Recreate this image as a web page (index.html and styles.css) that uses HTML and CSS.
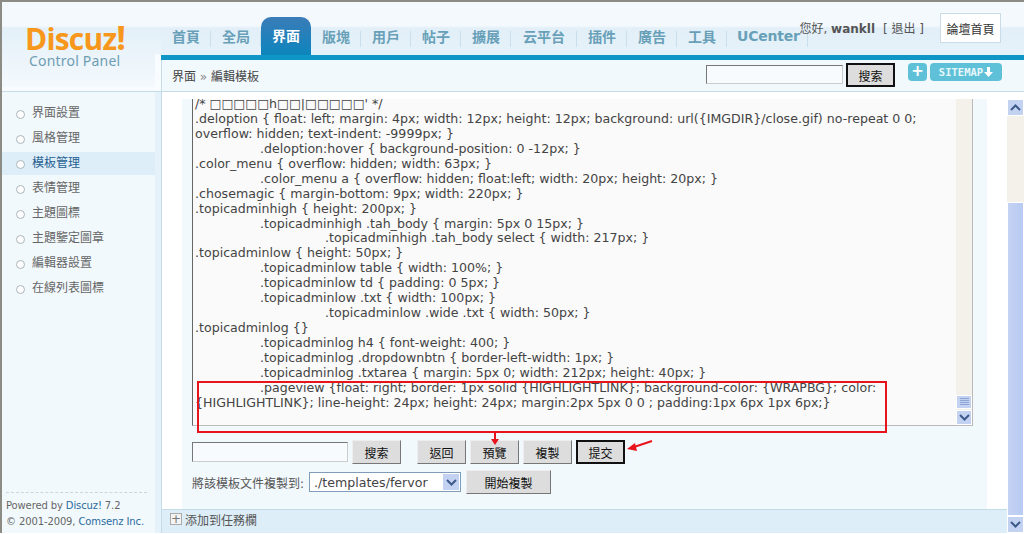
FILE: index.html
```html
<!DOCTYPE html>
<html lang="zh-Hant">
<head>
<meta charset="utf-8">
<title>Discuz! Control Panel</title>
<link rel="stylesheet" href="styles.css">
</head>
<body>
<div class="shell">
  <aside class="side">
    <div class="logo">
      <div class="logo-mark">Discuz<span class="logo-bang">!</span></div>
      <div class="logo-sub">Control Panel</div>
    </div>
    <ul class="menu">
      <li class="menu-item">界面設置</li>
      <li class="menu-item">風格管理</li>
      <li class="menu-item active">模板管理</li>
      <li class="menu-item">表情管理</li>
      <li class="menu-item">主題圖標</li>
      <li class="menu-item">主題鑒定圖章</li>
      <li class="menu-item">編輯器設置</li>
      <li class="menu-item">在線列表圖標</li>
    </ul>
    <div class="copy">
      <div>Powered by <a class="lnk">Discuz!</a> 7.2</div>
      <div>© 2001-2009, <a class="lnk">Comsenz Inc.</a></div>
    </div>
  </aside>
  <div class="right">
    <header class="top">
      <nav class="tabs">
        <a class="tab">首頁</a>
        <a class="tab">全局</a>
        <a class="tab on">界面</a>
        <a class="tab">版塊</a>
        <a class="tab">用戶</a>
        <a class="tab">帖子</a>
        <a class="tab">擴展</a>
        <a class="tab wide">云平台</a>
        <a class="tab">插件</a>
        <a class="tab">廣告</a>
        <a class="tab">工具</a>
        <a class="tab uc">UCenter</a>
      </nav>
      <div class="user">
        <span>您好, <b>wankll</b></span>
        <span class="logout">[ 退出 ]</span>
        <a class="home">論壇首頁</a>
      </div>
    </header>
    <div class="sub">
      <div class="crumb">界面 <span class="sep">»</span> 編輯模板</div>
      <div class="sub-tools">
        <input class="field top-field" type="text">
        <button class="btn strong">搜索</button>
        <span class="plus">+</span>
        <span class="sitemap">SITEMAP<svg class="map-arrow" width="9" height="10" viewBox="0 0 9 10"><path d="M3 0h3v5h3l-4.500 5L0 5h3z" fill="#fff"/></svg></span>
      </div>
    </div>
    <div class="lower">
      <div class="frame-col">
        <main class="frame">
          <div class="panel">
            <div class="editor">
<pre class="code">/* □□□□□h□□|□□□□□' */
.deloption { float: left; margin: 4px; width: 12px; height: 12px; background: url({IMGDIR}/close.gif) no-repeat 0 0;
overflow: hidden; text-indent: -9999px; }
	.deloption:hover { background-position: 0 -12px; }
.color_menu { overflow: hidden; width: 63px; }
	.color_menu a { overflow: hidden; float:left; width: 20px; height: 20px; }
.chosemagic { margin-bottom: 9px; width: 220px; }
.topicadminhigh { height: 200px; }
	.topicadminhigh .tah_body { margin: 5px 0 15px; }
		.topicadminhigh .tah_body select { width: 217px; }
.topicadminlow { height: 50px; }
	.topicadminlow table { width: 100%; }
	.topicadminlow td { padding: 0 5px; }
	.topicadminlow .txt { width: 100px; }
		.topicadminlow .wide .txt { width: 50px; }
.topicadminlog {}
	.topicadminlog h4 { font-weight: 400; }
	.topicadminlog .dropdownbtn { border-left-width: 1px; }
	.topicadminlog .txtarea { margin: 5px 0; width: 212px; height: 40px; }
	.pageview {float: right; border: 1px solid {HIGHLIGHTLINK}; background-color: {WRAPBG}; color:
{HIGHLIGHTLINK}; line-height: 24px; height: 24px; margin:2px 5px 0 0 ; padding:1px 6px 1px 6px;}</pre>
              <div class="ta-bar">
                <span class="ta-track"></span>
                <span class="ta-thumb"><svg width="9" height="8" viewBox="0 0 9 8"><path d="M0 .5h9M0 2.500h9M0 4.500h9M0 6.500h9" stroke="#8ea3d6"/></svg></span>
                <span class="ta-btn"><svg width="11" height="7" viewBox="0 0 11 7"><path d="M1 1l4.500 4.500L10 1" fill="none" stroke="#3d5a8a" stroke-width="2"/></svg></span>
              </div>
            </div>
            <div class="row row-a">
              <input class="field find-field" type="text">
              <button class="btn">搜索</button>
              <button class="btn gap-l">返回</button>
              <button class="btn">預覽</button>
              <button class="btn">複製</button>
              <button class="btn strong">提交</button>
            </div>
            <div class="row row-b">
              <span class="copy-label">將該模板文件複製到:</span>
              <span class="select">./templates/fervor<span class="select-btn"><svg width="11" height="7" viewBox="0 0 11 7"><path d="M1 1l4.500 4.500L10 1" fill="none" stroke="#3d5a8a" stroke-width="2"/></svg></span></span>
              <button class="btn copy-btn">開始複製</button>
            </div>
          </div>
        </main>
        <div class="taskbar"><span class="task-plus">+</span>添加到任務欄</div>
      </div>
      <div class="scroll">
        <span class="sb-btn"><svg width="11" height="7" viewBox="0 0 11 7"><path d="M1 6l4.500-4.500L10 6" fill="none" stroke="#3d5a8a" stroke-width="2"/></svg></span>
        <span class="sb-track"></span>
        <span class="sb-thumb"></span>
        <span class="sb-btn"><svg width="11" height="7" viewBox="0 0 11 7"><path d="M1 1l4.500 4.500L10 1" fill="none" stroke="#3d5a8a" stroke-width="2"/></svg></span>
      </div>
    </div>
  </div>
  <div class="mark-box"></div>
  <svg class="mark-down" width="10" height="12" viewBox="0 0 10 12"><path d="M4 0h2v6h3l-4 6-4-6h3z" fill="#e8141c"/></svg>
  <svg class="mark-left" width="26" height="12" viewBox="0 0 26 12"><path d="M25 1L7 7" stroke="#e8141c" stroke-width="2"/><path d="M0 9l8-6 2 8z" fill="#e8141c"/></svg>
</div>
</body>
</html>
```
FILE: styles.css
```css
* { box-sizing: border-box; }
html, body { margin: 0; height: 534px; overflow: hidden; background: #fff; }
body { font: 12px "DejaVu Sans", "Noto Sans CJK TC", sans-serif; color: #555; }
ul { list-style: none; margin: 0; padding: 0; }

.shell { position: relative; display: flex; height: 533px; border-top: 2px solid #8c8c84; border-left: 2px solid #8c8c84; }

.side { width: 159px; display: flex; flex-direction: column; background: linear-gradient(90deg, #f2f9fd 153px, #e6f2f9 153px); }
.logo { height: 89px; flex: none; background: linear-gradient(#f8fcfe, #f8fcfe) right bottom / 6px 37px no-repeat, linear-gradient(#f8fcfe, #f8fcfe) left bottom / 100% 4px no-repeat, linear-gradient(#f3f9fd 0, #f3f9fd 24px, #e3f0f8 26px, #f4f9fd 85px); padding: 17px 0 0 23px; }
.logo-mark { font: bold 30px/36px "Open Sans", "Liberation Sans", sans-serif; letter-spacing: -.8px; color: #f7971c; height: 35px; }
.logo-bang { font-size: 34px; }
.logo-sub { font: 14px/20px "Noto Sans", sans-serif; color: #6f9db2; padding-left: 4px; letter-spacing: .2px; margin-top: -3px; }
.menu { flex: 1; border-top: 1px solid #c4dbe8; padding-top: 9px; }
.menu-item { height: 25px; line-height: 25px; margin-right: 6px; padding-left: 30px; position: relative; font-size: 12px; color: #666; background: #f2f9fd; }
.menu-item::before { content: ""; position: absolute; left: 14px; top: 9px; width: 7px; height: 7px; border: 1px solid #aab5bb; border-radius: 50%; background: #fff; }
.menu-item.active { color: #1f5f92; background: #deeef8; height: 23px; line-height: 23px; margin: 1px 6px 1px 0; }
.menu-item.active::before { top: 8px; }
.copy { margin: 0 14px 0 4px; padding: 5px 0 0 0; border-top: 1px dashed #c9d6de; height: 41px; font: 10px/16px "DejaVu Sans", sans-serif; color: #666; white-space: nowrap; letter-spacing: -.12px; }
.lnk { color: #2a6a9e; }

.right { flex: 1; min-width: 0; display: flex; flex-direction: column; border-left: 1px solid #c4dbe8; }
.top { position: relative; height: 58px; margin-left: -1px; display: flex; background: linear-gradient(#f3f9fd 0, #f3f9fd 24px, #e2eff8 26px, #e6f2f9 52px); border-bottom: 5px solid #0d96c6; }
.tabs { display: flex; align-items: flex-end; }
.tab { width: 50px; height: 38px; padding-bottom: 1px; display: flex; align-items: center; justify-content: center; font: bold 14px "Noto Sans CJK TC", sans-serif; color: #68a0b8; background: linear-gradient(#c8dfec, #c8dfec) right 14px / 1px 16px no-repeat; }
.tab.on { color: #fff; background: linear-gradient(#3a7cb8, #0d85bd); border-radius: 10px 10px 0 0; padding-bottom: 2px; }
.tab.wide { width: 66px; }
.tab.uc { width: 81px; padding-left: 10px; justify-content: flex-start; white-space: nowrap; font: bold 14px "DejaVu Sans", sans-serif; letter-spacing: -.2px; }
.user { position: absolute; right: 23px; top: 11px; display: flex; align-items: flex-start; font-size: 12px; color: #555; }
.user > span { padding-top: 6px; white-space: nowrap; }
.logout { margin-left: 8px; }
.home { margin-left: 16px; width: 61px; height: 30px; border: 1px solid #c8dbe6; background: #fff; display: flex; align-items: center; justify-content: center; color: #333; }

.sub { height: 32px; display: flex; justify-content: space-between; align-items: flex-start; background: #f2f9fd; border-bottom: 1px solid #c4dbe8; }
.crumb { padding: 7px 0 0 10px; font-size: 12px; color: #444; }
.sep { color: #888; }
.sub-tools { display: flex; align-items: flex-start; margin-right: 22px; padding-top: 3px; }
.field { display: block; border: 1px solid; border-color: #777 #ccc #ccc #777; background: #f8fbfd; height: 20px; padding: 0; }
.top-field { width: 137px; margin: 2px 3px 0 0; height: 19px; }
.btn { width: 49px; height: 24px; padding: 0; font: 12px "Noto Sans CJK TC", sans-serif; color: #111; background: #ddd; border: 1px solid; border-color: #eee #777 #777 #eee; }
.btn.strong { border: 2px solid #111; }
.plus { width: 19px; height: 18px; margin-left: 13px; border-radius: 4px; background: #5fc1d8; color: #fff; font: bold 15px/17px "DejaVu Sans", sans-serif; text-align: center; }
.sitemap { width: 72px; height: 18px; margin-left: 3px; border-radius: 4px; background: #5fc1d8; color: #e8f8fb; font: bold 10.500px/18px "DejaVu Sans Mono", monospace; display: flex; align-items: center; justify-content: center; gap: 1px; }

.lower { flex: 1; min-height: 0; display: flex; padding-top: 7px; background: #fff; }
.frame-col { flex: 1; display: flex; flex-direction: column; min-width: 0; }
.frame { flex: 1; min-height: 0; padding: 0 20px; }
.panel { height: 100%; background: #f2f9fd; padding-left: 10px; padding-right: 12px; }
.editor { height: 327px; width: 781px; display: flex; background: #fafafa; border-left: 1px solid #666; border-bottom: 1px solid #bbb; border-right: 1px solid #bbb; overflow: hidden; }
.code { flex: 1; min-width: 0; margin: -2px 0 0; padding: 0 2px; white-space: pre-wrap; tab-size: 65px; overflow: hidden; font: 12.600px/14.930px "DejaVu Sans", sans-serif; color: #444; }
.ta-bar { width: 16px; display: flex; flex-direction: column; background: #f3f1ea; }
.ta-btn { flex: none; height: 15px; display: flex; align-items: center; justify-content: center; background: #c4d2f2; border: 1px solid #fff; }
.ta-track { flex: 1; }
.ta-thumb { height: 14px; margin-bottom: 1px; display: flex; align-items: center; justify-content: center; background: #c4d2f2; border: 1px solid #fff; }
.row { display: flex; align-items: center; }
.row-a { margin-top: 14px; gap: 4px; }
.find-field { width: 156px; }
.gap-l { margin-left: 12px; }
.row-b { margin-top: 6px; }
.copy-label { width: 117px; font-size: 12px; color: #555; white-space: nowrap; }
.select { position: relative; width: 152px; height: 20px; padding: 0 4px; border: 1px solid #7f9db9; background: #fff; font: 12.600px/19px "DejaVu Sans", sans-serif; color: #444; }
.select-btn { position: absolute; right: 1px; top: 1px; width: 16px; height: 16px; display: flex; align-items: center; justify-content: center; background: #c4d2f2; }
.copy-btn { width: 85px; margin-left: 5px; }

.taskbar { height: 24px; flex: none; display: flex; align-items: flex-start; background: #deeef8; border-top: 1px solid #c4dbe8; padding: 1px 0 0 8px; font-size: 12px; color: #555; gap: 3px; }
.task-plus { width: 12px; height: 12px; margin-top: 2px; border: 1px solid #aaa; background: #f4f4f4; font: 12px/10px "DejaVu Sans", sans-serif; text-align: center; color: #777; }

.scroll { width: 17px; flex: none; display: flex; flex-direction: column; background: #f3f1ea; }
.sb-btn { flex: none; height: 17px; display: flex; align-items: center; justify-content: center; background: #c4d2f2; border: 1px solid #fff; }
.sb-track { height: 86px; flex: none; }
.sb-thumb { flex: 1; background: linear-gradient(90deg, #c4d2f2, #b8caf4); border: 1px solid #fff; }

.mark-box { position: absolute; left: 195px; top: 379px; width: 690px; height: 52px; border: 2px solid #e8141c; }
.mark-down { position: absolute; left: 488px; top: 431px; }
.mark-left { position: absolute; left: 625px; top: 438px; }
```
